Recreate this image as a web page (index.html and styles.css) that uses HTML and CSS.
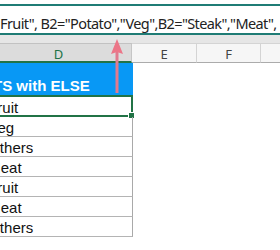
FILE: index.html
```html
<!DOCTYPE html>
<html>
<head>
<meta charset="utf-8">
<link rel="stylesheet" href="styles.css">
</head>
<body>
<div class="page">
  <div class="topstrip"></div>
  <div class="fbar"><span class="ftext">Fruit", B2="Potato","Veg",B2="Steak","Meat",</span></div>
  <div class="band"></div>
  <div class="colhead">
    <div class="ch ch-d">D</div>
    <div class="ch ch-e">E</div>
    <div class="ch ch-f">F</div>
    <div class="ch ch-rest"></div>
  </div>
  <div class="sheet">
    <div class="col">
      <div class="title"><span class="title-text">TS with ELSE</span></div>
      <div class="cell first"><span class="val">Fruit</span><div class="sel"><div class="handle"></div></div></div>
      <div class="cell"><span class="val">Veg</span></div>
      <div class="cell"><span class="val">Others</span></div>
      <div class="cell"><span class="val">Meat</span></div>
      <div class="cell"><span class="val">Fruit</span></div>
      <div class="cell"><span class="val">Meat</span></div>
      <div class="cell"><span class="val">Others</span></div>
    </div>
    <div class="blank"></div>
  </div>
  <div class="bottombar"></div>
  <svg class="arrow" width="16" height="60" viewBox="0 0 16 60">
    <rect x="6.5" y="12" width="3" height="42" fill="#e27a8e"/>
    <path d="M8 0 L14 15 L8 13 L2 15 Z" fill="#ec7688"/>
  </svg>
</div>
</body>
</html>
```
FILE: styles.css
```css
html, body {
  margin: 0;
  padding: 0;
  background: #ffffff;
}
.page {
  position: relative;
  width: 280px;
  height: 250px;
  overflow: hidden;
  font-family: "Liberation Sans", Arial, sans-serif;
}
.topstrip {
  height: 4px;
  border-bottom: 2px solid #1f7c75;
  background: #ffffff;
}
.fbar {
  height: 29px;
  border-bottom: 2px solid #1f7c75;
  background: #ffffff;
  white-space: nowrap;
  overflow: hidden;
  font-family: "Noto Sans", "Open Sans", sans-serif;
  font-size: 14.5px;
  letter-spacing: -0.6px;
  word-spacing: 0;
  line-height: 20px;
  color: #222222;
  padding-top: 7px;
  box-sizing: border-box;
}
.ftext {
  display: inline-block;
  margin-left: 0;
}
.band {
  height: 8px;
  background: #e6e6e6;
}
.colhead {
  display: flex;
  height: 20px;
  font-family: "Noto Sans", "Open Sans", sans-serif;
  font-size: 13px;
  line-height: 18px;
  color: #444444;
}
.ch {
  box-sizing: border-box;
  height: 20px;
  text-align: center;
  background: #f6f6f6;
  border-top: 1px solid #d4d4d4;
  border-bottom: 1px solid #ababab;
  border-right: 1px solid #d4d4d4;
  padding-top: 1px;
}
.ch-d {
  width: 132px;
  padding-right: 14px;
  background: #dcdcdc;
  color: #217346;
  border-top: 1px solid #c2c2c2;
  border-right: 1px solid #c6c6c6;
  border-bottom: 2px solid #217346;
}
.ch-e { width: 65px; }
.ch-f { width: 64px; }
.ch-rest { flex: 1; border-right: none; }
.sheet {
  display: flex;
  height: 183px;
}
.col {
  width: 133px;
  display: flex;
  flex-direction: column;
}
.title {
  height: 33px;
  background: #0898f5;
  color: #ffffff;
  font-weight: bold;
  font-size: 15px;
  line-height: 17px;
  padding-top: 14px;
  box-sizing: border-box;
  white-space: nowrap;
  overflow: hidden;
}
.title-text {
  display: inline-block;
  margin-left: -7px;
}
.cell {
  position: relative;
  box-sizing: border-box;
  height: 20px;
  border-bottom: 1px solid #b4b4b4;
  border-right: 1px solid #a9a9a9;
  font-size: 15px;
  line-height: 17px;
  padding-top: 2px;
  color: #111111;
  white-space: nowrap;
}
.cell.first {
  height: 21px;
  padding-top: 3px;
}
.val {
  display: inline-block;
  margin-left: -11.8px;
}
.sel {
  position: absolute;
  top: -1px;
  left: -4px;
  right: -1px;
  bottom: -1px;
  border: 2px solid #217346;
}
.handle {
  position: absolute;
  right: -4px;
  bottom: -4px;
  width: 5px;
  height: 5px;
  background: #217346;
  border: 1px solid #ffffff;
}
.blank {
  flex: 1;
}
.bottombar {
  height: 2px;
  margin-top: 10px;
  background: #a9a9a9;
}
.arrow {
  position: absolute;
  left: 109px;
  top: 39px;
}
```
